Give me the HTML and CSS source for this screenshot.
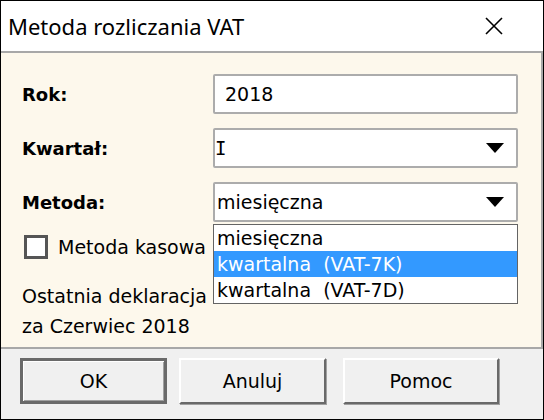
FILE: index.html
```html
<!DOCTYPE html>
<html lang="pl">
<head>
<meta charset="utf-8">
<title>Metoda rozliczania VAT</title>
<link rel="stylesheet" href="styles.css">
</head>
<body>
<div class="window">
  <div class="titlebar">
    <span class="title">Metoda rozliczania VAT</span>
    <svg class="close" width="18" height="18" viewBox="0 0 18 18"><path d="M1 1 L17 17 M17 1 L1 17" stroke="#000" stroke-width="1.6" fill="none"/></svg>
  </div>
  <div class="content">
    <div class="form">
      <div class="label">Rok:</div>
      <div class="field edit">2018</div>
      <div class="label">Kwartał:</div>
      <div class="field select"><span class="roman">I</span><span class="arrow"></span></div>
      <div class="label">Metoda:</div>
      <div class="field select combo"><span>miesięczna</span><span class="arrow"></span>
        <ul class="list">
          <li>miesięczna</li>
          <li class="sel">kwartalna&nbsp; (VAT-7K)</li>
          <li>kwartalna&nbsp; (VAT-7D)</li>
        </ul>
      </div>
    </div>
    <div class="check"><span class="box"></span><span>Metoda kasowa</span></div>
    <div class="info">Ostatnia deklaracja<br>za Czerwiec 2018</div>
  </div>
  <div class="buttons">
    <div class="btn default">OK</div>
    <div class="btn">Anuluj</div>
    <div class="btn wide">Pomoc</div>
  </div>
</div>
</body>
</html>
```
FILE: styles.css
```css
* { box-sizing: border-box; }
html, body { margin: 0; padding: 0; background: #fff; }
.window {
  width: 544px; height: 420px;
  border: 1px solid #000;
  display: flex; flex-direction: column;
  font-family: Tahoma, "DejaVu Sans", sans-serif;
  color: #000;
  overflow: hidden;
}
.titlebar {
  height: 50px; flex: none;
  display: flex; align-items: center; justify-content: space-between;
  padding: 0 40px 0 7px;
  background: #fff;
}
.title { font-family: "Noto Sans", "Open Sans", sans-serif; font-size: 22px; }
.content {
  flex: none; height: 298px;
  background: #fdf8ec;
  border-top: 2px solid #a8a8a8;
  border-right: 2px solid #a8a8a8;
  border-bottom: 2px solid #a8a8a8;
  padding: 21px 0 0 21px;
  font-size: 19px;
}
.form {
  display: grid;
  grid-template-columns: 191px 305px;
  grid-auto-rows: 40px;
  row-gap: 14px;
  align-items: center;
}
.label { font-weight: bold; font-size: 18px; }
.field {
  height: 40px; background: #fff;
  border: 2px solid #acacac; border-radius: 2px;
  display: flex; align-items: center;
}
.edit { padding-left: 10px; }
.select { padding: 0 12px 0 2px; justify-content: space-between; }
.roman { font-family: "DejaVu Sans Mono", monospace; font-size: 19px; margin-left: -2px; }
.arrow {
  width: 0; height: 0;
  border-left: 9px solid transparent; border-right: 9px solid transparent;
  border-top: 10px solid #000;
}
.combo { position: relative; }
.list {
  position: absolute; left: -2px; top: 40px; width: 305px;
  margin: 0; padding: 0; list-style: none;
  background: #fff; border: 1px solid #646464;
}
.list li { height: 26px; line-height: 26px; padding-left: 3px; white-space: pre; }
.list li.sel { background: #3399ff; color: #fff; }
.check { display: flex; align-items: center; gap: 10px; margin-top: 13px; margin-left: 2px; height: 24px; }
.box { width: 24px; height: 24px; border: 3px solid #555; background: #fff; flex: none; }
.info { margin-top: 22px; line-height: 30px; }
.buttons {
  flex: 1; background: #f0f0f0;
  display: flex; padding: 9px 0 0 19px; gap: 12px;
  font-size: 19px;
}
.btn {
  width: 147px; height: 46px;
  display: flex; align-items: center; justify-content: center;
  background: #f0f0f0;
  border-top: 2px solid #fff; border-left: 2px solid #fff;
  border-right: 2px solid #696969; border-bottom: 2px solid #696969;
  box-shadow: 1px 1px 0 #a0a0a0;
}
.btn.wide { width: 156px; margin-left: 5px; }
.btn.default { border: 3px solid #6a6a6a; box-shadow: inset 1px 1px 0 #fff, inset -1px -1px 0 #a0a0a0; }
```
